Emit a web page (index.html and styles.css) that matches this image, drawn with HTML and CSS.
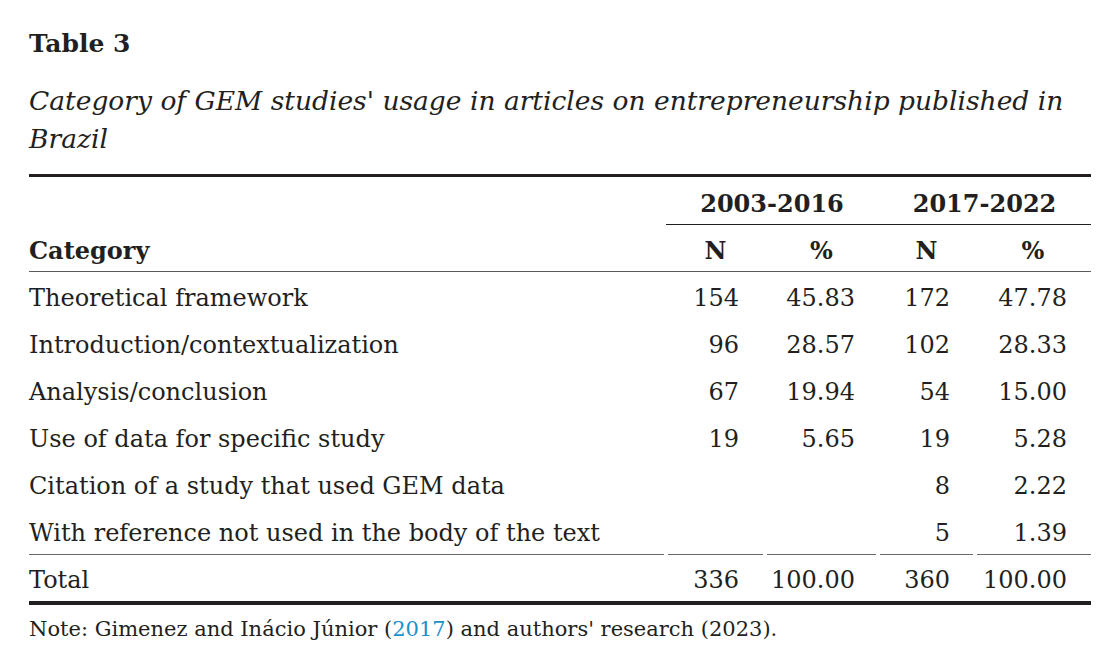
FILE: index.html
```html
<!DOCTYPE html>
<html lang="en">
<head>
<meta charset="utf-8">
<title>Table 3</title>
<link rel="stylesheet" href="styles.css">
</head>
<body>
<div class="page">
  <h2 class="label">Table 3</h2>
  <p class="caption">Category of GEM studies' usage in articles on entrepreneurship published in Brazil</p>
  <table class="data">
    <colgroup>
      <col class="c-cat">
      <col class="c-n1">
      <col class="c-p1">
      <col class="c-n2">
      <col class="c-p2">
    </colgroup>
    <thead>
      <tr class="h1">
        <th class="cat" rowspan="2">Category</th>
        <th class="period" colspan="2">2003-2016</th>
        <th class="period" colspan="2">2017-2022</th>
      </tr>
      <tr class="h2">
        <th>N</th>
        <th>%</th>
        <th>N</th>
        <th>%</th>
      </tr>
    </thead>
    <tbody>
      <tr>
        <td>Theoretical framework</td><td class="num n1">154</td><td class="num p1">45.83</td><td class="num n2">172</td><td class="num p2">47.78</td>
      </tr>
      <tr>
        <td>Introduction/contextualization</td><td class="num n1">96</td><td class="num p1">28.57</td><td class="num n2">102</td><td class="num p2">28.33</td>
      </tr>
      <tr>
        <td>Analysis/conclusion</td><td class="num n1">67</td><td class="num p1">19.94</td><td class="num n2">54</td><td class="num p2">15.00</td>
      </tr>
      <tr>
        <td>Use of data for specific study</td><td class="num n1">19</td><td class="num p1">5.65</td><td class="num n2">19</td><td class="num p2">5.28</td>
      </tr>
      <tr>
        <td>Citation of a study that used GEM data</td><td class="num n1"></td><td class="num p1"></td><td class="num n2">8</td><td class="num p2">2.22</td>
      </tr>
      <tr class="last">
        <td class="seg first">With reference not used in the body of the text</td><td class="num n1 seg"></td><td class="num p1 seg"></td><td class="num n2 seg">5</td><td class="num p2 seg end">1.39</td>
      </tr>
      <tr class="total">
        <td>Total</td><td class="num n1">336</td><td class="num p1">100.00</td><td class="num n2">360</td><td class="num p2">100.00</td>
      </tr>
    </tbody>
  </table>
  <p class="note">Note: Gimenez and Inácio Júnior (<a class="ref" href="#">2017</a>) and authors' research (2023).</p>
</div>
</body>
</html>
```

FILE: styles.css
```css
html, body {
  margin: 0;
  padding: 0;
  background: #ffffff;
}

body {
  font-family: "DejaVu Serif", "Liberation Serif", serif;
  color: #231f20;
}

.page {
  padding: 26px 20px 0 29px;
}

.label {
  margin: 0;
  font-size: 25px;
  font-weight: bold;
  line-height: 36px;
}

.caption {
  margin: 20px 0 0;
  font-size: 26.5px;
  font-style: italic;
  line-height: 38px;
}

.data {
  margin-top: 16px;
  width: 100%;
  table-layout: fixed;
  border-collapse: separate;
  border-spacing: 0;
  border-top: 3px solid #231f20;
  font-size: 24px;
}

.c-cat { width: 637px; }
.c-n1 { width: 99px; }
.c-p1 { width: 113px; }
.c-n2 { width: 97px; }
.c-p2 { width: 116px; }

.data th,
.data td {
  padding: 5px 0 0;
  line-height: 42px;
  white-space: nowrap;
  vertical-align: top;
}

.data th {
  font-weight: bold;
  text-align: center;
}

.h1 th {
  padding-top: 7px;
  line-height: 40px;
}

.h1 .period {
  border-bottom: 1px solid #231f20;
}

.h2 th {
  line-height: 41px;
  border-bottom: 1px solid #5a5a5a;
}

.data th.cat {
  text-align: left;
  vertical-align: bottom;
  line-height: 41px;
  border-bottom: 1px solid #5a5a5a;
}

.data td.num {
  text-align: right;
}

.n1 { padding-right: 26px !important; }
.p1 { padding-right: 23px !important; }
.n2 { padding-right: 25px !important; }
.p2 { padding-right: 24px !important; }

.last td {
  line-height: 43px;
}

.seg {
  background-image: linear-gradient(#6a6a6a, #6a6a6a);
  background-repeat: no-repeat;
  background-position: 2px 100%;
  background-size: calc(100% - 4px) 1px;
}

.seg.first {
  background-position: 0 100%;
  background-size: calc(100% - 2px) 1px;
}

.seg.end {
  background-position: 2px 100%;
  background-size: calc(100% - 2px) 1px;
}

.total td {
  line-height: 41px;
  border-bottom: 4px solid #231f20;
}

.note {
  margin: 10px 0 0;
  font-size: 21px;
  line-height: 28px;
}

.ref {
  color: #1a90cc;
  text-decoration: none;
}
```
